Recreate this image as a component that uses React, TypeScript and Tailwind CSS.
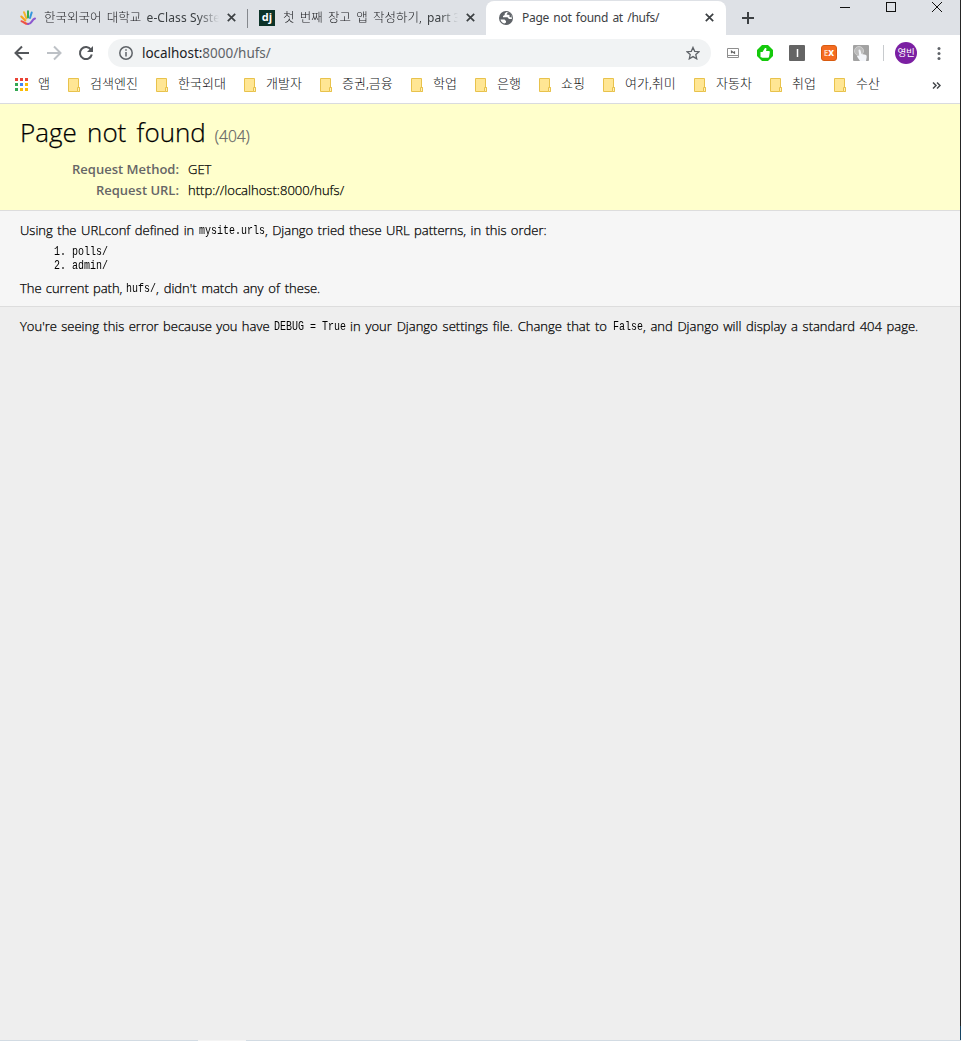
import React from "react";

const bookmarks = [
  { name: "검색엔진", w: "w-[88px]" },
  { name: "한국외대", w: "w-[88px]" },
  { name: "개발자", w: "w-[76px]" },
  { name: "증권,금융", w: "w-[91px]" },
  { name: "학업", w: "w-[64px]" },
  { name: "은행", w: "w-[64px]" },
  { name: "쇼핑", w: "w-[64px]" },
  { name: "여가,취미", w: "w-[91px]" },
  { name: "자동차", w: "w-[76px]" },
  { name: "취업", w: "w-[64px]" },
  { name: "수산", w: "w-[64px]" },
];

const appColors = [
  "bg-[#ea4335]", "bg-[#ea4335]", "bg-[#ea4335]",
  "bg-[#34a853]", "bg-[#4285f4]", "bg-[#fbbc05]",
  "bg-[#34a853]", "bg-[#fbbc05]", "bg-[#fbbc05]",
];

function Close() {
  return (
    <svg className="size-[9px] shrink-0" viewBox="0 0 9 9" stroke="#3c4043" strokeWidth="1.7">
      <path d="M.8.8l7.4 7.4M8.2.8L.8 8.2" />
    </svg>
  );
}

function Folder() {
  return (
    <svg className="h-[14px] w-[13px] shrink-0" viewBox="0 0 13 14" fill="#ffe694" stroke="#e8c24c">
      <path d="M.5.5h10v9h1v4h-11z" />
      <path d="M9.5 13V9.5h2v4h-2" fill="#fff0b8" />
    </svg>
  );
}

function Mono({ children, w }: { children: React.ReactNode; w: string }) {
  return (
    <span className={`${w} inline-block shrink-0 pt-px font-['Liberation_Mono',monospace] [-webkit-text-stroke:0px]`}>
      <span className="inline-block origin-left scale-x-[0.769] whitespace-pre text-[13px] text-black">{children}</span>
    </span>
  );
}

function TabStrip() {
  return (
    <div className="flex h-[35px] bg-[#dee1e6] text-[12px] text-[#3c4043]">
      <div className="flex w-[247px] shrink-0 items-center pl-5">
        <svg className="size-4 shrink-0" viewBox="0 0 16 16" fill="none" strokeLinecap="round" strokeWidth="2">
          <path d="M1.3 6.5l4 4" stroke="#f5a21b" />
          <path d="M4 2.2l2.4 6.2" stroke="#f4b52a" />
          <path d="M8 1.2v6.3" stroke="#35aa53" />
          <path d="M11.7 2.5L10 8" stroke="#3495de" />
          <path d="M1.5 11.2c2 .2 3.200 2.800 6.500 2.800" stroke="#ee5147" />
          <path d="M8 14c4 .2 3.500-4.500 7-5.500" stroke="#8c58cf" />
        </svg>
        <span className="ml-2 h-5 w-[175px] shrink-0 whitespace-pre leading-5 [mask-image:linear-gradient(to_right,#000_88%,transparent)]">
          <span className="text-[12.500px] font-light text-[#202124] [word-spacing:2px]">한국외국어 대학교 </span><span className="tracking-[0.1px]">e-Class Syste</span>
        </span>
        <span className="ml-2 flex"><Close /></span>
      </div>
      <div className="mt-[9px] h-[19px] w-px shrink-0 bg-[#85888d]" />
      <div className="flex w-[238px] shrink-0 items-center pl-[11px]">
        <span className="flex size-4 shrink-0 items-center justify-center bg-[#0c3328] pb-[2px] font-['Open_Sans',sans-serif] text-[11px] leading-none font-bold text-white">dj</span>
        <span className="ml-2 h-5 w-[175px] shrink-0 whitespace-pre leading-5 [mask-image:linear-gradient(to_right,#000_90%,transparent)]">
          <span className="text-[12.500px] font-light text-[#202124] [word-spacing:2px]">첫 번째 장고 앱 작성하기, </span>part 3
        </span>
        <span className="ml-[8px] flex"><Close /></span>
      </div>
      <div className="mt-px flex w-[240px] shrink-0 items-center rounded-t-lg bg-white pl-3">
        <svg className="-mt-px size-[16px] shrink-0" viewBox="0 0 16 16">
          <circle cx="8" cy="8" r="7" fill="#5f6368" />
          <path d="M2.500 9.500h4l1.500 1.500v1.500l-1.500 1c-2.300-.6-3.600-2-4-4zM8.500 2l-1.800 1.500V5L5 6v1.200h4.500L11 9h2.800C14.300 5.500 12.500 2.500 8.500 2z" fill="#fff" />
          <path d="M10 2.200L8.500 4.500l3 .5V7l2 .500C14 5 12.500 2.700 10 2.200z" fill="#5f6368" />
        </svg>
        <span className="-mt-px ml-2 w-[184px] shrink-0 whitespace-pre tracking-[-0.28px] [word-spacing:1.500px]">Page not found at /hufs/</span>
        <span className="-mt-px -ml-px flex"><Close /></span>
      </div>
      <svg className="mt-3 ml-[16px] size-3 shrink-0" viewBox="0 0 12 12" stroke="#3c4043" strokeWidth="2">
        <path d="M6 0v12M0 6h12" />
      </svg>
      <svg className="mt-[2px] ml-[86px] h-[11px] w-[102px] shrink-0" viewBox="0 0 102 11" fill="none" stroke="#111" shapeRendering="crispEdges">
        <path d="M0 5.500h10M46.500.500h9v9h-9z" />
        <path d="M92 0l10 10M102 0L92 10" shapeRendering="auto" />
      </svg>
    </div>
  );
}

function Toolbar() {
  return (
    <div className="flex h-[36px] items-center bg-white pl-[14px]">
      <svg className="h-4 w-[80px] shrink-0" viewBox="0 0 80 16" fill="none" strokeWidth="2">
        <path d="M15 8H2M8 1.500L1.500 8 8 14.500" stroke="#54575b" />
        <path d="M33 8h13M40 1.500L46.500 8 40 14.500" stroke="#bdc1c6" />
        <path d="M77 4.800A6 6 0 1 0 77.800 9.500" stroke="#54575b" />
        <path d="M79 1v6h-6z" fill="#54575b" />
      </svg>
      <div className="ml-[14px] flex h-7 w-[603px] shrink-0 items-center rounded-full bg-[#f1f3f4] pr-[11px] pl-[11px]">
        <svg className="size-[14px] shrink-0" viewBox="0 0 14 14" fill="none" stroke="#5f6368" strokeWidth="1.500">
          <circle cx="7" cy="7" r="6.200" />
          <path d="M7 6v4.500M7 3.300v1.500" />
        </svg>
        <span className="ml-[9px] text-[13.500px] tracking-[-0.03px] text-[#202124]">localhost:<span className="text-[#5f6368]">8000/hufs/</span></span>
        <svg className="ml-auto size-[14px] shrink-0" viewBox="0 0 14 14" fill="none" stroke="#5f6368" strokeWidth="1.300">
          <path d="M7 1.400l1.700 3.900 4.300.4-3.200 2.900.9 4.200L7 10.600l-3.700 2.200.9-4.200L1 5.700l4.300-.4z" />
        </svg>
      </div>
      <svg className="ml-4 h-[10px] w-3 shrink-0" viewBox="0 0 12 10" fill="none" stroke="#8e8e8e">
        <path d="M.500.500h11v9H.500zM1 7.500h10" />
        <path d="M4.500 5.200v-2l3 2v-2" strokeWidth="1.200" stroke="#666" />
      </svg>
      <svg className="ml-[18px] size-4 shrink-0" viewBox="0 0 16 16">
        <path d="M5 0h6l5 5v6l-5 5H5l-5-5V5z" fill="#15c90c" />
        <path d="M3.500 7h2L8 3q1.500-.5 1.500 1L9 6h3q1 .3.800 1.300L12 12q-.3.800-1 .8H5.500L3.500 12z" fill="#fff" />
      </svg>
      <svg className="ml-4 size-4 shrink-0" viewBox="0 0 16 16">
        <rect width="16" height="16" rx="1" fill="#646464" />
        <path d="M8.500 4v8" stroke="#fff" strokeWidth="1.500" />
      </svg>
      <span className="ml-4 flex size-4 shrink-0 items-center justify-center rounded-[3px] border border-[#d85b10] bg-[#f46b20] font-['Open_Sans',sans-serif] text-[10px] leading-none font-bold text-white"><span className="text-[8px] text-[#ffd2b5]">E</span><span className="-mt-[2px]">x</span></span>
      <svg className="ml-4 size-4 shrink-0" viewBox="0 0 16 16">
        <rect width="16" height="16" rx="1" fill="#a2a2a2" />
        <circle cx="6" cy="6" r="4.500" fill="#bbb" stroke="#d0d0d0" />
        <path d="M5.500 5q1.300-1 2 .5l1 3.500 4 .8q1.500.6 1.200 2.200L13 16H7l-3-4.500q.6-1.300 2.300-.2z" fill="#f4f6fa" />
      </svg>
      <span className="ml-[14px] h-4 w-px shrink-0 bg-[#c8cbce]" />
      <span className="ml-[11px] flex size-[22px] shrink-0 items-center justify-center rounded-full bg-[#7b1fa2] text-[9.500px] leading-none tracking-[-0.2px] text-white">영빈</span>
      <svg className="ml-[19.500px] h-[13px] w-1 shrink-0" viewBox="0 0 4 13" fill="#5f6368">
        <circle cx="2" cy="1.500" r="1.500" /><circle cx="2" cy="6.500" r="1.500" /><circle cx="2" cy="11.500" r="1.500" />
      </svg>
    </div>
  );
}

function BookmarkBar() {
  return (
    <div className="flex h-[33px] items-center border-b border-[#d9dbdf] bg-white pb-[5px] pl-[15px] text-[13px] text-[#101214]">
      <span className="grid shrink-0 grid-cols-3 gap-[2px]">
        {appColors.map((c, i) => <i key={i} className={`size-[3px] ${c}`} />)}
      </span>
      <span className="-mt-px ml-[10px] w-[30px] shrink-0 font-light">앱</span>
      {bookmarks.map((b) => (
        <span key={b.name} className={`flex shrink-0 items-center whitespace-nowrap ${b.w}`}>
          <Folder />
          <span className="-mt-px ml-[9px] font-light">{b.name}</span>
        </span>
      ))}
      <svg className="mt-px ml-[34px] h-[7px] w-[9px] shrink-0" viewBox="0 0 9 7" fill="none" stroke="#45484c" strokeWidth="1.500">
        <path d="M1 .500l3 3-3 3M5 .500l3 3-3 3" />
      </svg>
    </div>
  );
}

export default function App() {
  return (
    <div className="flex h-[1041px] w-[961px] flex-col overflow-hidden bg-[#eee] font-['Noto_Sans','Noto_Sans_CJK_KR',sans-serif]">
      <div className="flex h-[1040px]">
        <div className="w-[960px] shrink-0">
          <TabStrip />
          <Toolbar />
          <BookmarkBar />
          <main className="font-['Open_Sans',sans-serif] text-[13px] leading-5 font-light text-black [-webkit-text-stroke:0.25px]">
            <header className="h-[107px] border-b border-[#ddd] bg-[#ffc] pt-[9px] pl-5">
              <h1 className="flex h-[37px] items-baseline whitespace-pre text-[26px] leading-[38px] [word-spacing:3.500px]">
                Page not found<span className="ml-[9px] text-[15.500px] text-[#666]">(404)</span>
              </h1>
              <table className="mt-[8px] border-collapse">
                <tbody>
                  <tr className="h-[21px]">
                    <th className="w-[159px] p-0 text-right font-semibold text-[#666] [-webkit-text-stroke:0px]">Request Method:</th>
                    <td className="p-0 pl-[9px]">GET</td>
                  </tr>
                  <tr className="h-[21px]">
                    <th className="p-0 text-right font-semibold text-[#666] [-webkit-text-stroke:0px]">Request URL:</th>
                    <td className="p-0 pl-[9px] tracking-[0.03px]">http://localhost:8000/hufs/</td>
                  </tr>
                </tbody>
              </table>
            </header>
            <section className="h-[96px] border-b border-[#ddd] bg-[#f6f6f6] pt-[9px] pl-5">
              <p className="flex h-5 whitespace-pre">
                <span className="w-[179px] shrink-0 [word-spacing:1.200px]">Using the URLconf defined in</span>
                <Mono w="w-[66px]">mysite.urls</Mono>
                <span className="[word-spacing:1px]">, Django tried these URL patterns, in this order:</span>
              </p>
              <ol className="mt-[4px] pl-[34px] leading-[14px]">
                <li className="flex h-[14px]"><Mono w="w-[18px]">1.</Mono><Mono w="w-[40px]">polls/</Mono></li>
                <li className="flex h-[14px]"><Mono w="w-[18px]">2.</Mono><Mono w="w-[40px]">admin/</Mono></li>
              </ol>
              <p className="mt-[6px] flex h-5 whitespace-pre">
                <span className="w-[106px] shrink-0 tracking-[-0.04px] [word-spacing:1px]">The current path,</span>
                <Mono w="w-[30px]">hufs/</Mono>
                <span className="[word-spacing:1.500px]">, didn't match any of these.</span>
              </p>
            </section>
            <section className="pt-[9px] pl-5">
              <p className="flex h-5 whitespace-pre">
                <span className="w-[254px] shrink-0 [word-spacing:1px]">You're seeing this error because you have</span>
                <Mono w="w-[76px]">DEBUG = True</Mono>
                <span className="w-[263px] shrink-0 [word-spacing:1.500px]">in your Django settings file. Change that to</span>
                <Mono w="w-[30px]">False</Mono>
                <span className="[word-spacing:1.300px]">, and Django will display a standard 404 page.</span>
              </p>
            </section>
          </main>
        </div>
        <div className="flex w-px shrink-0 flex-col bg-[#252525]">
          <span className="mt-[1026px] h-[14px] bg-[#164463]" />
        </div>
      </div>
      <div className="flex h-px bg-[#d2dbe3]">
        <span className="ml-[198px] h-px w-12 bg-[#f4f4f4]" />
      </div>
    </div>
  );
}
